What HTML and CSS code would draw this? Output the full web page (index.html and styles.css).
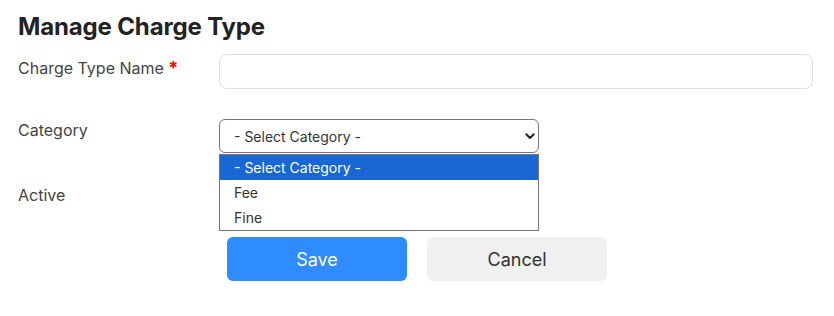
FILE: index.html
```html
<!DOCTYPE html>
<html>
<head>
<meta charset="utf-8">
<link rel="stylesheet" href="styles.css">
</head>
<body>
<div class="page">
  <h1 class="title">Manage Charge Type</h1>
  <div class="form">
    <div class="row row-name">
      <label class="label">Charge Type Name <span class="req">*</span></label>
      <div class="control"><div class="input"></div></div>
    </div>
    <div class="row row-cat">
      <label class="label">Category</label>
      <div class="control">
        <div class="select-wrap">
          <div class="select">
            <span class="select-text">- Select Category -</span>
            <svg class="chev" width="10" height="7" viewBox="0 0 10 7"><path d="M1.3 1.3 L5 5 L8.7 1.3" fill="none" stroke="#222" stroke-width="2" stroke-linecap="round" stroke-linejoin="round"/></svg>
          </div>
          <div class="popup">
            <div class="opt opt-sel">- Select Category -</div>
            <div class="opt">Fee</div>
            <div class="opt">Fine</div>
          </div>
        </div>
      </div>
    </div>
    <div class="row row-active">
      <label class="label">Active</label>
      <div class="control"></div>
    </div>
    <div class="actions">
      <button class="btn btn-save">Save</button>
      <button class="btn btn-cancel">Cancel</button>
    </div>
  </div>
</div>
</body>
</html>
```
FILE: styles.css
```css
html, body {
  margin: 0;
  padding: 0;
  background: #fff;
}
body {
  font-family: Inter, "Noto Sans", sans-serif;
  color: #444;
}
.page {
  padding: 12px 21px 0 18px;
}
.title {
  margin: 0;
  font-size: 24px;
  line-height: 29px;
  font-weight: 700;
  letter-spacing: -0.15px;
  color: #222;
}
.form {
  margin-top: 13px;
}
.row {
  display: grid;
  grid-template-columns: 201px 1fr;
  align-items: start;
}
.row-name { margin-bottom: 30px; }
.row-cat { margin-bottom: 30px; }
.row-active { height: 24px; margin-bottom: 30px; }
.label {
  font-size: 16px;
  line-height: 24px;
  color: #444;
  padding-top: 2px;
}
.row-cat .label { padding-top: 0; margin-top: -1px; }
.row-active .label { padding-top: 0; }
.req {
  color: #f00;
  font-weight: 700;
  font-size: 18px;
}
.input {
  height: 33px;
  border: 1px solid #ddd;
  border-radius: 8px;
  background: #fff;
}
.select-wrap {
  position: relative;
  width: 320px;
}
.select {
  height: 32px;
  border: 1px solid #767676;
  border-radius: 6px;
  display: flex;
  align-items: center;
  justify-content: space-between;
  padding: 0 3px 0 14px;
  background: #fff;
}
.select-text {
  font-size: 14px;
  color: #333;
}
.chev { display: block; }
.popup {
  position: absolute;
  left: 0;
  top: 35px;
  width: 318px;
  border: 1px solid #767676;
  background: #fff;
  z-index: 10;
}
.opt {
  height: 25px;
  line-height: 25px;
  padding-left: 14px;
  font-size: 14px;
  color: #333;
}
.opt-sel {
  background: #1967d2;
  color: #fff;
}
.actions {
  display: flex;
  gap: 20px;
  padding-left: 209px;
}
.btn {
  width: 180px;
  height: 44px;
  border: none;
  border-radius: 6px;
  font-family: Inter, "Noto Sans", sans-serif;
  font-size: 18px;
  cursor: pointer;
}
.btn-save {
  background: #2f8cff;
  color: #fff;
}
.btn-cancel {
  background: #f0f0f0;
  color: #333;
}
```
